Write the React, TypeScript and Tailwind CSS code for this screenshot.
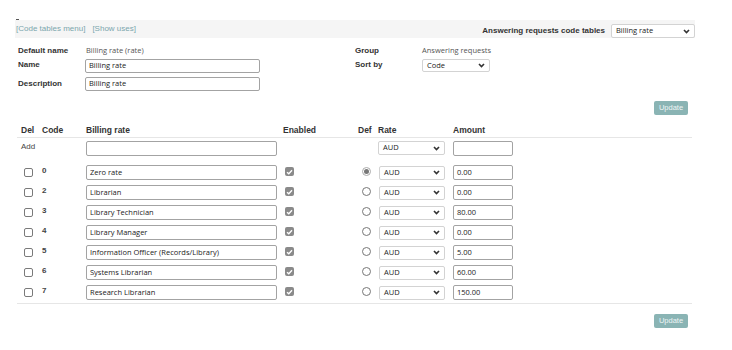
import React from 'react';

const rows = [
  { code: '0', name: 'Zero rate', amount: '0.00', def: true },
  { code: '2', name: 'Librarian', amount: '0.00', def: false },
  { code: '3', name: 'Library Technician', amount: '80.00', def: false },
  { code: '4', name: 'Library Manager', amount: '0.00', def: false },
  { code: '5', name: 'Information Officer (Records/Library)', amount: '5.00', def: false },
  { code: '6', name: 'Systems Librarian', amount: '60.00', def: false },
  { code: '7', name: 'Research Librarian', amount: '150.00', def: false },
];

const Chevron = () => (
  <svg width="7" height="5" viewBox="0 0 7 5" className="shrink-0">
    <path d="M1 1 L3.5 3.6 L6 1" fill="none" stroke="#333" strokeWidth="1.6" />
  </svg>
);

// fake select box, looks closer than a native one
const Select = ({ value, className }: { value: string; className: string }) => (
  <div
    className={`flex items-center justify-between bg-white border border-[#d3d3d3] rounded-[2px] pl-[4px] pr-[4px] font-['Open_Sans',sans-serif] text-[7.5px] text-[#222] ${className}`}
  >
    <span>{value}</span>
    <Chevron />
  </div>
);

const TextBox = ({ value, className }: { value: string; className: string }) => (
  <div
    className={`flex items-center bg-white border border-[#a3a3a3] rounded-[2px] pl-[3px] font-['Open_Sans',sans-serif] text-[7.5px] text-[#222] whitespace-nowrap overflow-hidden ${className}`}
  >
    {value}
  </div>
);

const UpdateButton = () => (
  <div className="flex justify-end w-[688px]">
    <div className="w-[34px] h-[14px] flex items-center justify-center rounded-[2px] bg-[#8ab4b4] text-[#eef5f5] text-[7.5px]">
      Update
    </div>
  </div>
);

const cols = 'grid grid-cols-[23px_46px_195px_75px_22px_75px_1fr]';

const App = () => {
  return (
    <div className="w-[732px] h-[350px] bg-white overflow-hidden font-['Liberation_Sans',Arial,sans-serif] text-[#333]">
      <div className="pt-[19px] pl-[16px]">
        <div className="w-[3px] h-[1px] bg-[#555]" />
      </div>

      {/* top bar */}
      <div className="ml-[15px] w-[680px] h-[18px] bg-[#f5f5f5] flex justify-between">
        <div className="flex items-center gap-[7px] pl-[1px] text-[8px] text-[#7ba6ad]">
          <span>[Code tables menu]</span>
          <span>[Show uses]</span>
        </div>
        <div className="flex items-center self-end gap-[6px]">
          <span className="font-bold text-[8px] text-[#333]">Answering requests code tables</span>
          <Select value="Billing rate" className="w-[84px] h-[14px]" />
        </div>
      </div>

      {/* header form */}
      <div className="flex mt-[7px] text-[8px]">
        <div className="w-[355px] pl-[18px] flex flex-col">
          <div className="flex items-center h-[11px]">
            <span className="w-[68px] font-bold">Default name</span>
            <span className="font-['Open_Sans',sans-serif] text-[7.5px] text-[#555]">Billing rate (rate)</span>
          </div>
          <div className="flex items-start mt-[3px]">
            <span className="w-[67px] font-bold">Name</span>
            <TextBox value="Billing rate" className="w-[175px] h-[14px]" />
          </div>
          <div className="flex items-start mt-[4px]">
            <span className="w-[67px] font-bold pt-[1px]">Description</span>
            <TextBox value="Billing rate" className="w-[175px] h-[14px]" />
          </div>
        </div>
        <div className="flex flex-col">
          <div className="flex items-center h-[11px]">
            <span className="w-[67px] font-bold">Group</span>
            <span className="font-['Open_Sans',sans-serif] text-[7.5px] text-[#555]">Answering requests</span>
          </div>
          <div className="flex items-start mt-[3px]">
            <span className="w-[67px] font-bold">Sort by</span>
            <Select value="Code" className="w-[68px] h-[13px]" />
          </div>
        </div>
      </div>

      <div className="mt-[10px]">
        <UpdateButton />
      </div>

      {/* table */}
      <div className="ml-[17px] w-[675px] mt-[8px]">
        <div className={`${cols} h-[15px] items-center border-b border-[#e6e6e6] font-bold text-[8.5px] text-[#333]`}>
          <span className="pl-[4px]">Del</span>
          <span className="pl-[2px]">Code</span>
          <span>Billing rate</span>
          <span className="pl-[2px]">Enabled</span>
          <span className="pl-[2px]">Def</span>
          <span>Rate</span>
          <span>Amount</span>
        </div>

        <div className={`${cols} h-[15px] items-start mt-[3px] text-[8px]`}>
          <span className="pl-[4px] text-[#444]">Add</span>
          <span />
          <TextBox value="" className="w-[191px] h-[15px]" />
          <span />
          <span />
          <Select value="AUD" className="w-[67px] h-[14px]" />
          <TextBox value="" className="w-[60px] h-[15px]" />
        </div>

        <div className="flex flex-col gap-[5px] mt-[9px] pb-[3px] border-b border-[#e6e6e6]">
          {rows.map((r) => (
            <div key={r.code} className={`${cols} h-[15px] items-center text-[8px]`}>
              <div className="pl-[7px]">
                <div className="w-[9px] h-[9px] border border-[#7a7a7a] rounded-[2px] bg-white" />
              </div>
              <span className="pl-[2px] pb-[3px] font-bold text-[#444]">{r.code}</span>
              <TextBox value={r.name} className="w-[191px] h-[15px]" />
              <div className="pl-[4px] pb-[2px]">
                <div className="w-[9px] h-[9px] rounded-[2px] bg-[#8a8a8a] flex items-center justify-center">
                  <svg width="7" height="6" viewBox="0 0 7 6">
                    <path d="M1 3.2 L2.8 4.8 L6 1.2" fill="none" stroke="#fff" strokeWidth="1.3" />
                  </svg>
                </div>
              </div>
              <div className="pl-[6px] pb-[2px]">
                {r.def ? (
                  <div className="w-[9px] h-[9px] rounded-full border border-[#aaa] flex items-center justify-center">
                    <div className="w-[5px] h-[5px] rounded-full bg-[#777]" />
                  </div>
                ) : (
                  <div className="w-[9px] h-[9px] rounded-full border border-[#777] bg-white" />
                )}
              </div>
              <div className="pl-[1px]">
                <Select value="AUD" className="w-[66px] h-[14px]" />
              </div>
              <TextBox value={r.amount} className="w-[60px] h-[15px]" />
            </div>
          ))}
        </div>
      </div>

      <div className="mt-[10px]">
        <UpdateButton />
      </div>
    </div>
  );
};

export default App;
